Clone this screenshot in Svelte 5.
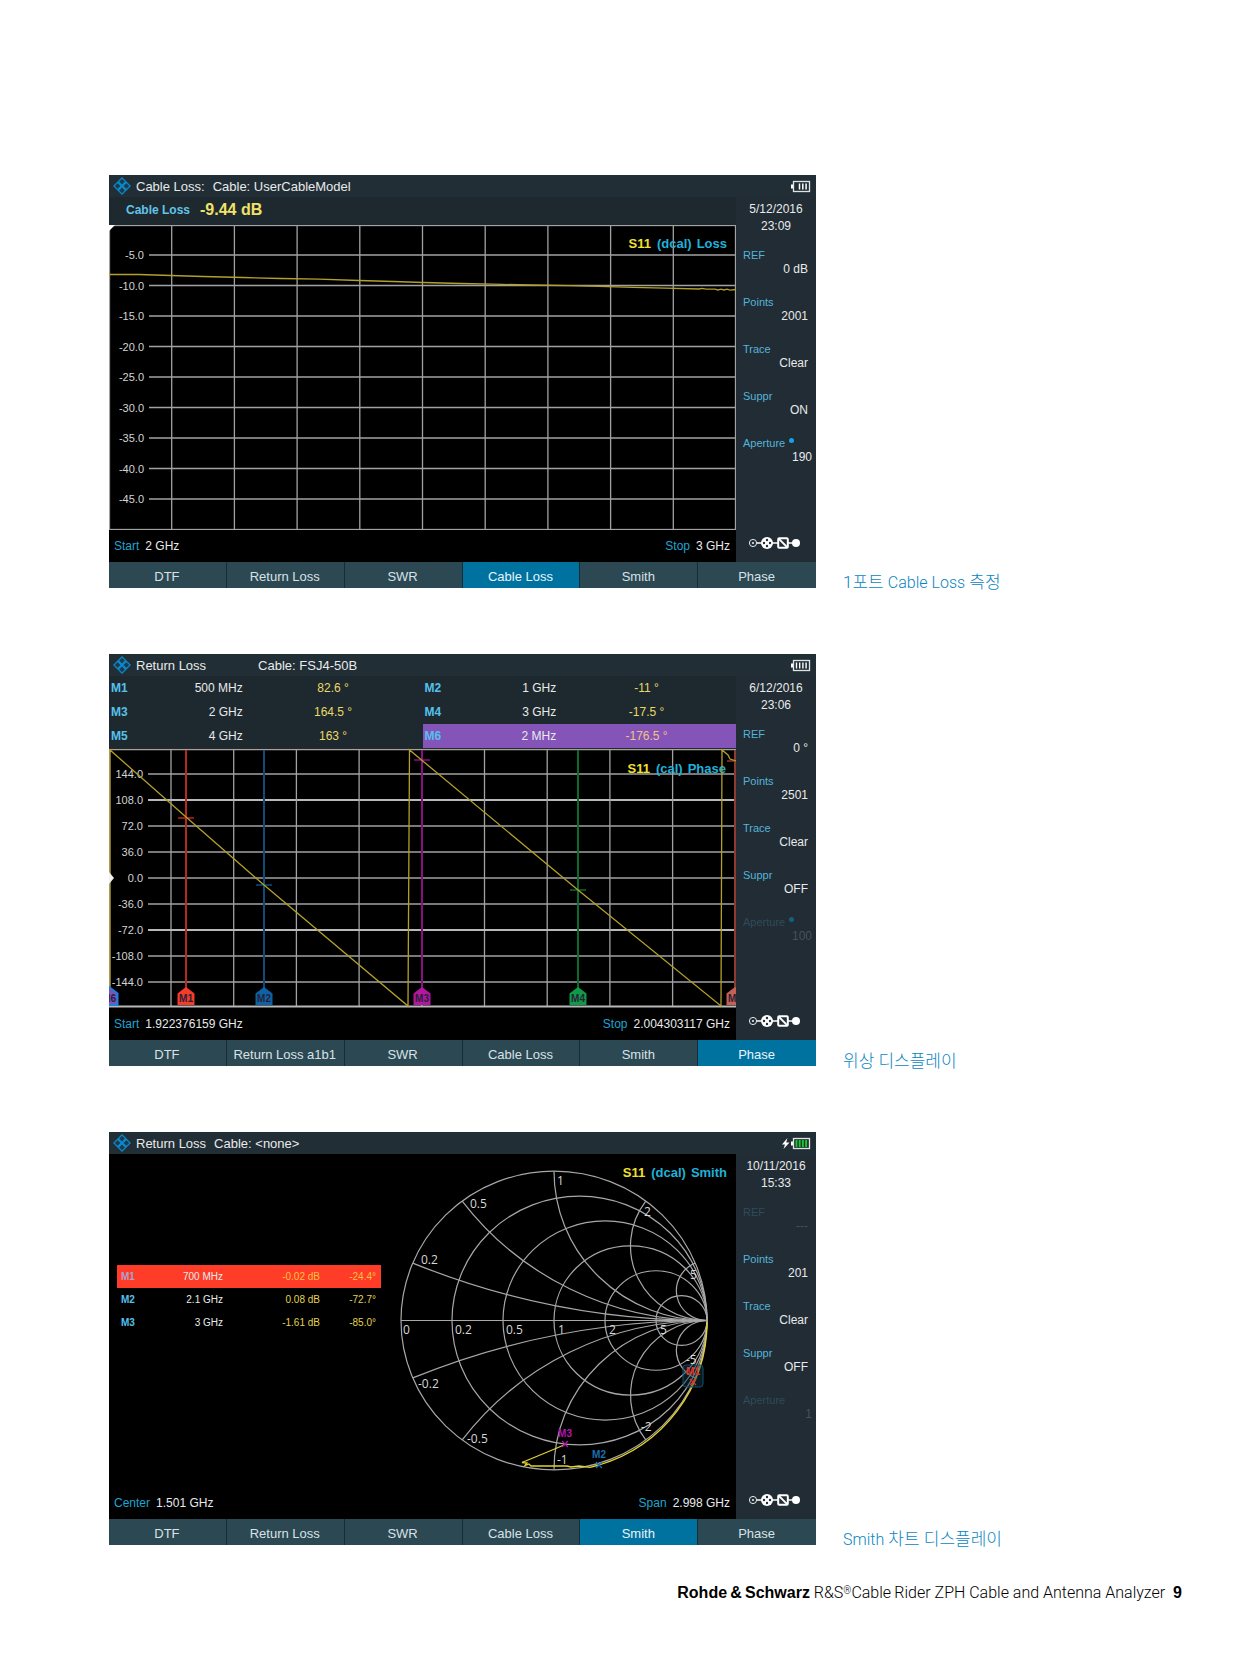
<script>
  const side = (ref, points, suppr, aperture, opts = {}) => [
    { label: 'REF', value: ref, dim: opts.refDim },
    { label: 'Points', value: points },
    { label: 'Trace', value: 'Clear' },
    { label: 'Suppr', value: suppr },
    { label: 'Aperture', value: aperture, dot: opts.dot, dim: opts.apDim, wide: true }
  ];

  const tabs = (second = 'Return Loss') => ['DTF', second, 'SWR', 'Cable Loss', 'Smith', 'Phase'];

  const lossSide = side('0 dB', '2001', 'ON', '190', { dot: true });
  const phaseSide = side('0 °', '2501', 'OFF', '100', { dot: true, apDim: true });
  const smithSide = side('---', '201', 'OFF', '1', { refDim: true, apDim: true });

  const lossLabels = ['-5.0', '-10.0', '-15.0', '-20.0', '-25.0', '-30.0', '-35.0', '-40.0', '-45.0'];
  const phaseLabels = ['144.0', '108.0', '72.0', '36.0', '0.0', '-36.0', '-72.0', '-108.0', '-144.0'];
  const nine = [1, 2, 3, 4, 5, 6, 7, 8, 9];

  const phaseRows = [
    [['M1', '500 MHz', '82.6 °'], ['M2', '1 GHz', '-11 °']],
    [['M3', '2 GHz', '164.5 °'], ['M4', '3 GHz', '-17.5 °']],
    [['M5', '4 GHz', '163 °'], ['M6', '2 MHz', '-176.5 °']]
  ];

  const phaseMarkers = [
    { name: 'M6', x: 0, y: 0, fill: '#7a55b8', line: 'none', stroke: '#1f7fe0' },
    { name: 'M1', x: 77, y: 69, fill: '#f43c28', line: '#b52a1e' },
    { name: 'M2', x: 155, y: 136, fill: '#0b63a5', line: '#114a78' },
    { name: 'M3', x: 313, y: 11, fill: '#b3169f', line: '#8a0f82' },
    { name: 'M4', x: 469, y: 141, fill: '#0f9a48', line: '#0b6a30' },
    { name: 'M5', x: 626, y: 12, fill: '#c46152', line: '#8d3a30' }
  ];

  const smithRows = [
    ['M1', '700 MHz', '-0.02 dB', '-24.4°'],
    ['M2', '2.1 GHz', '0.08 dB', '-72.7°'],
    ['M3', '3 GHz', '-1.61 dB', '-85.0°']
  ];

  // Smith chart geometry: unit circle mapped to the drawing
  const cx = 163, cy = 166.5, rx = 153, ry = 149.3;
  const values = [0.2, 0.5, 1, 2, 5];
  const circles = [0, ...values].map((r) => ({
    cx: cx + (rx * r) / (1 + r),
    rx: rx / (1 + r),
    ry: ry / (1 + r)
  }));
  const arcs = values.flatMap((v) =>
    [1, -1].map((s) => {
      const u = (v * v - 1) / (v * v + 1);
      const w = (2 * v) / (v * v + 1);
      return `M${cx + rx} ${cy}A${rx / v} ${ry / v} 0 0 ${s > 0 ? 1 : 0} ${cx + rx * u} ${cy - s * ry * w}`;
    })
  );
  const smithLabels = [
    ['0', 12, 180], ['0.2', 64, 180], ['0.5', 115, 180], ['1', 167, 180], ['2', 218, 180], ['5', 269, 180],
    ['0.2', 30, 110], ['0.5', 79, 54], ['1', 166, 31], ['2', 253, 62], ['5', 299, 125],
    ['-0.2', 27, 234], ['-0.5', 76, 289], ['-1', 166, 310], ['-2', 250, 277], ['-5', 295, 210]
  ];
  const smithMarks = [
    { name: 'M3', x: 174, y: 290, color: '#b416b0' },
    { name: 'M2', x: 208, y: 311, color: '#1c6fb0' },
    { name: 'M1', x: 302, y: 228, color: '#e83020' }
  ];
</script>

{#snippet header(title, cable, battery, wide = false)}
  <header class="bar">
    <svg class="logo" viewBox="0 0 18 18" aria-hidden="true">
      <path d="M9 0L18 9L9 18L0 9Z" fill="#0b88c9" />
      <path d="M9 1.8L11.8 4.6L9 7.4L6.2 4.6ZM9 10.6L11.8 13.4L9 16.2L6.2 13.4ZM4.6 6.2L7.4 9L4.6 11.8L1.8 9ZM13.4 6.2L16.2 9L13.4 11.8L10.6 9Z" fill="#1b3a4b" />
    </svg>
    <span>{title}</span>
    <span class:wide>{cable}</span>
    <svg class="battery" viewBox="0 0 30 13" aria-hidden="true">
      {#if battery === 'charging'}
        <path d="M6.5 1L1 7.5H4L2.5 12L8.5 5.5H5.2Z" fill="#fff" />
      {/if}
      <path d="M10 4.5h2v4h-2z" fill="#fff" />
      <rect x="12.5" y="1.5" width="16" height="10" fill="none" stroke="#dfe3e5" stroke-width="1.3" />
      {#if battery === 'charging'}
        <path d="M14 3h13v7H14z" fill="#12401c" />
        <path d="M15.5 3v7M18.7 3v7M21.9 3v7M25.1 3v7" stroke="#22c43c" stroke-width="1.8" />
      {:else if battery === 'full'}
        <path d="M15.5 3.5v6M18.7 3.5v6M21.9 3.5v6M25.1 3.5v6" stroke="#fff" stroke-width="1.4" />
      {:else}
        <path d="M18.5 3.5v6M21.8 3.5v6M25.1 3.5v6" stroke="#fff" stroke-width="1.5" />
      {/if}
    </svg>
  </header>
{/snippet}

{#snippet sidebar(date, time, items)}
  <aside>
    <time>{date}<br />{time}</time>
    <dl>
      {#each items as item}
        <div class="item" class:dim={item.dim}>
          <dt>{item.label}{#if item.dot}<i></i>{/if}</dt>
          <dd class:far={item.wide}>{item.value}</dd>
        </div>
      {/each}
    </dl>
    <svg class="route" viewBox="0 0 54 14" aria-hidden="true">
      <path d="M8 7H48" stroke="#fff" stroke-width="1.3" />
      <circle cx="5" cy="7" r="3.6" fill="#212c34" stroke="#e5e8ea" />
      <circle cx="5" cy="7" r="1.1" fill="#e5e8ea" />
      <circle cx="19" cy="7" r="6" fill="#fff" />
      <g fill="#212c34">
        <circle cx="19" cy="4" r="1.2" /><circle cx="19" cy="10" r="1.2" />
        <circle cx="16" cy="7" r="1.2" /><circle cx="22" cy="7" r="1.2" />
      </g>
      <rect x="30.2" y="2.2" width="9.6" height="9.6" rx="1" fill="#212c34" stroke="#fff" stroke-width="2" />
      <path d="M31 3l8 8" stroke="#fff" stroke-width="1.8" />
      <circle cx="48" cy="7" r="4" fill="#fff" />
    </svg>
  </aside>
{/snippet}

{#snippet tabbar(names, active)}
  <nav>
    {#each names as name}
      <button type="button" class:active={name === active}>{name}</button>
    {/each}
  </nav>
{/snippet}

{#snippet span(a, av, b, bv)}
  <div class="freq">
    <span><b>{a}</b>{av}</span>
    <span><b>{b}</b>{bv}</span>
  </div>
{/snippet}

{#snippet traceName(x, y, mode, kind)}
  <text class="trace-name" {x} {y} text-anchor="end"><tspan fill="#f2e02c">S11</tspan><tspan dx="6">{mode}</tspan><tspan dx="5">{kind}</tspan></text>
{/snippet}

<main>
  <figure>
    <section class="screen">
      {@render header('Cable Loss:', 'Cable: UserCableModel', 'three')}
      <div class="body">
        <div class="work">
          <p class="readout"><b>Cable Loss</b><strong>-9.44 dB</strong></p>
          <svg class="plot" viewBox="0 0 627 305" role="img" aria-label="Cable loss trace">
            <g class="grid">
              {#each nine as i}
                <path d="M{i * 62.7} 0V305M40 {i * 30.5 - 0.5}H627" />
              {/each}
              <rect x="0.5" y="0.5" width="626" height="304" />
            </g>
            <path d="M0 0H6L0 6Z" fill="#fff" />
            {#each lossLabels as label, i}
              <text class="axis" x="35" y={i * 30.5 + 34} text-anchor="end">{label}</text>
            {/each}
            <path class="trace" d="M0 49.5H30L62 50.5L94 51.5L134 52.5L172 53.5L210 54.2L250 55.5L284 56.5L314 57.5L352 58.5L384 59.2L421 60L460 60.6L490 61.4L524 62.4L556 63.2L590 64L593 63.4L597 64.2H606L609 65L612 64.2L615 65L618 64.2L621 65.2L627 64.5" />
            {@render traceName(618, 23, '(dcal)', 'Loss')}
          </svg>
          {@render span('Start', '2 GHz', 'Stop', '3 GHz')}
        </div>
        {@render sidebar('5/12/2016', '23:09', lossSide)}
      </div>
      {@render tabbar(tabs(), 'Cable Loss')}
    </section>
    <figcaption>1포트 <span>Cable Loss</span> 측정</figcaption>
  </figure>

  <figure>
    <section class="screen">
      {@render header('Return Loss', 'Cable: FSJ4-50B', 'full', true)}
      <div class="body">
        <div class="work">
          <table class="markers">
            <tbody>
              {#each phaseRows as row}
                <tr>
                  {#each row as [name, freq, value]}
                    <th scope="row" class:picked={name === 'M6'}>{name}</th>
                    <td class="f" class:picked={name === 'M6'}>{freq}</td>
                    <td class="v" class:picked={name === 'M6'}>{value}</td>
                  {/each}
                </tr>
              {/each}
            </tbody>
          </table>
          <svg class="plot" viewBox="0 -1 627 260" role="img" aria-label="Phase trace with markers">
            <g class="grid">
              {#each nine as i}
                <path d="M{i * 62.7 - 0.7} 0V258" />
                <path d="M39 {i * 26 - 1}H627" class:strong={i === 2 || i === 7} />
              {/each}
              <path d="M0 0.5H627M0.5 0V258" />
              <path d="M0 257.5H627" class="strong" />
            </g>
            {#each phaseLabels as label, i}
              <text class="axis" x="34" y={i * 26 + 29} text-anchor="end">{label}</text>
            {/each}
            {@render traceName(617, 24, '(cal)', 'Phase')}
            {#each phaseMarkers as m}
              <path d="M{m.x} 1V240" stroke={m.line} stroke-width="2" />
              <path d="M{m.x - 8} {m.y}H{m.x + 8}" stroke={m.line} stroke-width="1.5" />
            {/each}
            <path class="trace" d="M1 257V1L77 68L155 136L299 257L300.5 1L469 141L612 257L613 1L619 6L621 10L627 12" />
            {#each phaseMarkers as m}
              <path d="M{m.x - 8.5} 256V244.5L{m.x} 238L{m.x + 8.5} 244.5V256Z" fill={m.fill} stroke={m.stroke ?? 'none'} stroke-width="2" />
              <text class="tag" x={m.x} y="253" text-anchor="middle">{m.name}</text>
            {/each}
            <path d="M0 123L5 129L0 135Z" fill="#f2f2f2" />
          </svg>
          {@render span('Start', '1.922376159 GHz', 'Stop', '2.004303117 GHz')}
        </div>
        {@render sidebar('6/12/2016', '23:06', phaseSide)}
      </div>
      {@render tabbar(tabs('Return Loss a1b1'), 'Phase')}
    </section>
    <figcaption>위상 디스플레이</figcaption>
  </figure>

  <figure>
    <section class="screen">
      {@render header('Return Loss', 'Cable: <none>', 'charging')}
      <div class="body">
        <div class="work">
          <div class="smith">
            <table class="list">
              <tbody>
                {#each smithRows as [name, freq, mag, deg], i}
                  <tr class:hot={i === 0}>
                    <th scope="row">{name}</th>
                    <td>{freq}</td>
                    <td class="y">{mag}</td>
                    <td class="y last">{deg}</td>
                  </tr>
                {/each}
              </tbody>
            </table>
            <svg class="plot" viewBox="0 0 345 333" role="img" aria-label="Smith chart">
              <g class="net">
                {#each circles as c}
                  <ellipse cx={c.cx} {cy} rx={c.rx} ry={c.ry} />
                {/each}
                {#each arcs as d}
                  <path {d} />
                {/each}
                <path d="M{cx - rx} {cy}H{cx + rx}" />
              </g>
              {#each smithLabels as [label, x, y]}
                <text class="net-label" {x} {y}>{label}</text>
              {/each}
              <path class="trace bright" d="M316 168A153 149.3 0 0 1 208 311L199 313.3L188 312L180 313L176 312H140L138 310L134 311.5L136 309L131 308.5L166 294L174 290.5" />
              <rect x="292" y="211" width="20" height="22" rx="3" fill="#0d3a4c" fill-opacity="0.45" stroke="#14506a" />
              {#each smithMarks as m}
                <path d="M{m.x - 3} {m.y - 3}l6 6m0 -6l-6 6" stroke={m.color} stroke-width="1.2" />
                <text class="tag" x={m.x} y={m.y - 7} text-anchor="middle" style:fill={m.color}>{m.name}</text>
              {/each}
              {@render traceName(336, 23, '(dcal)', 'Smith')}
            </svg>
          </div>
          {@render span('Center', '1.501 GHz', 'Span', '2.998 GHz')}
        </div>
        {@render sidebar('10/11/2016', '15:33', smithSide)}
      </div>
      {@render tabbar(tabs(), 'Smith')}
    </section>
    <figcaption><span>Smith</span> 차트 디스플레이</figcaption>
  </figure>

  <footer><b>Rohde&thinsp;&amp;&thinsp;Schwarz</b> R&amp;S<sup>®</sup>Cable&thinsp;Rider ZPH Cable and Antenna Analyzer <b class="page">9</b></footer>
</main>

<style>
  :global(body) {
    margin: 0;
    background: #fff;
  }
  main {
    padding: 175px 59px 47px 109px;
    font-family: 'Liberation Sans', Arial, sans-serif;
  }
  figure {
    display: grid;
    grid-template-columns: minmax(0, 707fr) minmax(0, 339fr);
    column-gap: 27px;
    align-items: end;
    margin: 0 0 66px;
  }
  figcaption,
  figcaption span,
  footer {
    font-family: Roboto, 'Noto Sans CJK KR', sans-serif;
    font-weight: 300;
    font-size: 16px;
  }
  figcaption {
    color: #0a86c2;
    font-size: 17px;
    line-height: 10px;
  }
  .screen {
    background: #000;
    color: #e8eaeb;
    font-size: 12px;
  }
  .bar {
    display: flex;
    align-items: center;
    gap: 8px;
    height: 22px;
    padding: 0 5px 0 4px;
    background: #222e35;
    font-size: 13px;
  }
  .bar span {
    white-space: nowrap;
  }
  .wide {
    margin-left: 44px;
  }
  .logo {
    width: 18px;
    height: 18px;
    margin-right: -3px;
  }
  .battery {
    width: 30px;
    height: 13px;
    margin-left: auto;
  }
  .body {
    display: grid;
    grid-template-columns: minmax(0, 1fr) 80px;
  }
  .work {
    display: flex;
    flex-direction: column;
  }
  .plot {
    display: block;
    width: 100%;
    height: auto;
  }
  .readout {
    display: flex;
    align-items: center;
    gap: 10px;
    height: 26px;
    margin: 0;
    padding: 0 0 2px 17px;
    background: #1e292f;
  }
  .readout b {
    color: #62c4e8;
  }
  .readout strong {
    color: #f0e268;
    font-size: 16px;
  }
  .grid {
    fill: none;
    stroke: #a2a2a2;
    stroke-width: 1.3;
  }
  .strong {
    stroke: #b8b8b8;
    stroke-width: 2;
  }
  .axis {
    fill: #d4d4d4;
    font-size: 11px;
  }
  .trace {
    fill: none;
    stroke: #b39f2a;
    stroke-width: 1.3;
  }
  .bright {
    stroke: #e6d22c;
  }
  .trace-name {
    fill: #1fb2d8;
    font-size: 13px;
    font-weight: 700;
  }
  .tag {
    fill: #2a1f38;
    font-size: 10px;
    font-weight: 700;
  }
  .freq {
    display: flex;
    justify-content: space-between;
    align-items: center;
    height: 32px;
    padding: 0 6px 0 5px;
  }
  .freq b {
    margin-right: 6px;
    color: #1fa4d0;
    font-weight: 400;
  }
  aside {
    display: flex;
    flex-direction: column;
    padding: 4px 0 12px;
    background: #212c34;
  }
  time {
    line-height: 17px;
    text-align: center;
  }
  dl {
    margin: 13px 0 0;
  }
  .item {
    margin-bottom: 19px;
    padding: 0 8px 0 7px;
    line-height: 14px;
  }
  dt {
    color: #55b4da;
    font-size: 11px;
  }
  dt i {
    display: inline-block;
    width: 5px;
    height: 5px;
    margin: 0 0 7px 4px;
    border-radius: 50%;
    background: #14a0ea;
    vertical-align: bottom;
  }
  dd {
    margin: 0;
    text-align: right;
  }
  .far {
    margin-right: -4px;
  }
  .dim dt {
    color: #2f4b59;
  }
  .dim dt i {
    background: #145f85;
  }
  .dim dd {
    color: #46525a;
  }
  .route {
    width: 54px;
    height: 14px;
    margin: auto 0 0 12px;
  }
  nav {
    display: grid;
    grid-template-columns: repeat(6, minmax(0, 1fr));
    height: 26px;
  }
  button {
    padding: 2px 1px 0 0;
    border: 0;
    border-right: 1px solid #182c36;
    background: #2b4853;
    color: #d8e2e6;
    font: 13px 'Liberation Sans', Arial, sans-serif;
    white-space: nowrap;
  }
  button:last-child {
    border-right: 0;
  }
  .active {
    background: #0072a0;
    color: #e8f4fa;
  }
  table {
    border-collapse: collapse;
    table-layout: fixed;
  }
  th,
  td {
    padding: 0;
    white-space: nowrap;
  }
  th {
    color: #55c0ee;
    text-align: left;
  }
  .markers {
    width: 100%;
    background: #1e292f;
    line-height: 24px;
  }
  .markers th {
    width: 6%;
    padding-left: 2px;
  }
  .f {
    width: 15%;
    padding-right: 3px;
    text-align: right;
  }
  .v {
    padding-right: 2px;
    color: #e8d968;
    text-align: center;
  }
  .picked {
    background: #8454b8;
  }
  .markers .picked.v {
    color: #f0c488;
  }
  .smith {
    display: grid;
    grid-template-columns: minmax(0, 282fr) minmax(0, 345fr);
  }
  .list {
    width: 264px;
    margin: 111px 0 0 8px;
    align-self: start;
    font-size: 10px;
    line-height: 23px;
    text-align: right;
  }
  .list th {
    width: 36px;
    padding-left: 4px;
  }
  .list td {
    width: 66px;
  }
  .list .y {
    width: 97px;
    color: #e2d250;
  }
  .list .last {
    width: auto;
    padding-right: 5px;
  }
  .list .hot {
    background: #ff3c28;
  }
  .hot th {
    color: #b0a0c8;
  }
  .list .hot .y {
    color: #ffc040;
  }
  .net {
    fill: none;
    stroke: #a8a8a8;
    stroke-width: 1.2;
  }
  .net-label {
    fill: #d8d8d8;
    font-family: 'Open Sans', sans-serif;
    font-size: 12px;
  }
  footer {
    margin-top: -28px;
    color: #000;
    line-height: 20px;
    text-align: right;
  }
  footer b {
    font-family: 'Liberation Sans', Arial, sans-serif;
    font-weight: 700;
  }
  sup {
    font-size: 10px;
    line-height: 0;
    vertical-align: 4px;
  }
  .page {
    margin-left: 4px;
  }
</style>
